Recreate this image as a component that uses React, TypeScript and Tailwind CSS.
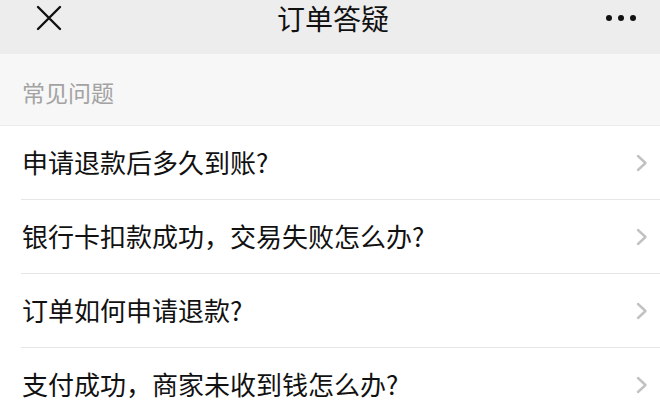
import React from "react";

const items = [
  "申请退款后多久到账?",
  "银行卡扣款成功，交易失败怎么办?",
  "订单如何申请退款?",
  "支付成功，商家未收到钱怎么办?",
];

function Chevron() {
  return (
    <svg width="12" height="18" viewBox="0 0 12 18" fill="none">
      <path d="M2 2 L9.5 9 L2 16" stroke="#c2c2c2" strokeWidth="2.4" strokeLinecap="round" strokeLinejoin="round" />
    </svg>
  );
}

export default function App() {
  return (
    <div
      className="w-[660px] h-[410px] overflow-hidden bg-white"
      style={{ fontFamily: '"Noto Sans CJK SC", "Noto Sans", sans-serif' }}
    >
      <div className="h-[54px] bg-[#ededed] relative">
        <div className="h-[36px] flex items-center justify-between pl-[36px] pr-[24px]">
          <svg width="26" height="26" viewBox="0 0 26 26" fill="none">
            <path d="M2 2 L24 24 M24 2 L2 24" stroke="#111" strokeWidth="2.4" strokeLinecap="round" />
          </svg>
          <div className="flex items-center gap-[6px]">
            <span className="w-[6px] h-[6px] rounded-full bg-[#111]" />
            <span className="w-[6px] h-[6px] rounded-full bg-[#111]" />
            <span className="w-[6px] h-[6px] rounded-full bg-[#111]" />
          </div>
        </div>
        <div className="absolute left-0 right-0 top-0 h-[36px] flex items-center justify-center pl-[6px]">
          <span className="text-[28px] leading-[36px] text-[#111]">订单答疑</span>
        </div>
      </div>
      <div className="h-[72px] bg-[#f7f7f7] flex items-center pl-[22px] pt-[4px] border-b border-[#ececec]">
        <span className="text-[23px] leading-[30px] text-[#a3a3a3]">常见问题</span>
      </div>
      <ul className="pl-[21px]">
        {items.map((t) => (
          <li key={t} className="h-[74px] flex items-center justify-between border-b border-[#e6e6e6] pr-[12px]">
            <span className="text-[26px] leading-[34px] text-[#111] pl-[1px] -mt-[2px]">{t}</span>
            <Chevron />
          </li>
        ))}
      </ul>
    </div>
  );
}
